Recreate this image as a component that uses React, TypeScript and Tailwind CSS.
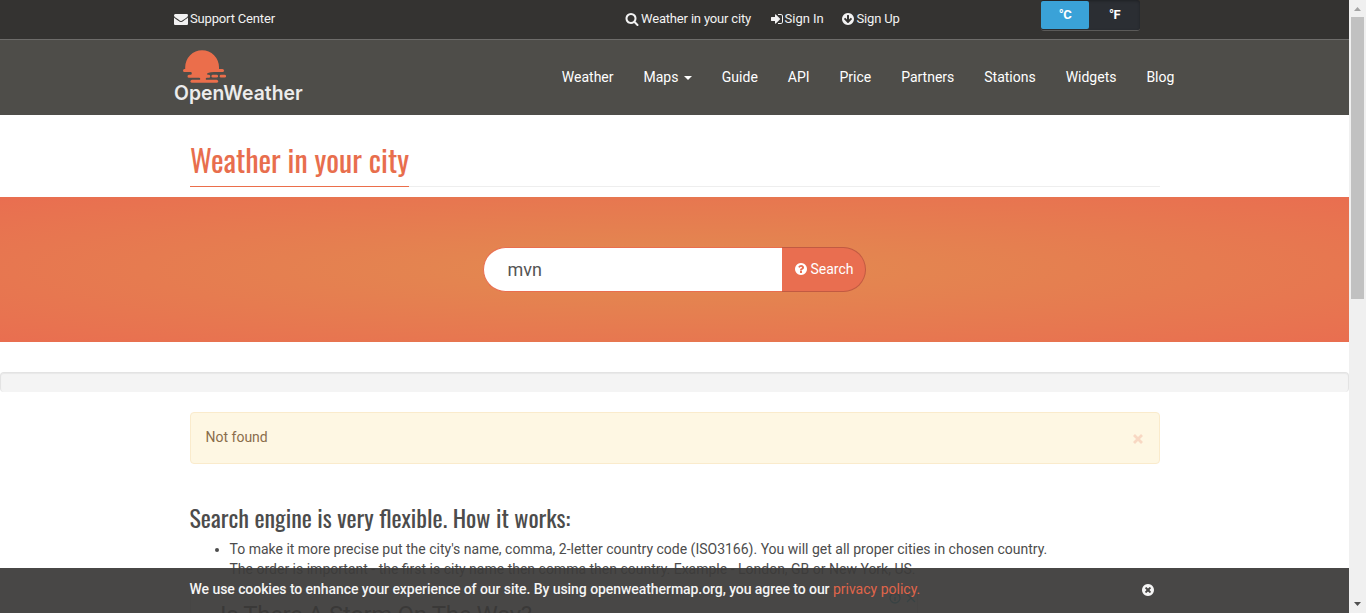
import React from "react";

const DISC = "m640 0q0 209-103 385.5t-279.5 279.5-385.5 103-385.5-103-279.5-279.5-103-385.5 103-385.5 279.5-279.5 385.5-103 385.5 103 279.5 279.5 103 385.5z";

const icons = {
  envelope:
    "M1792 710v794q0 66-47 113t-113 47h-1472q-66 0-113-47t-47-113v-794q44 49 101 87 362 246 497 345 57 42 92.5 65.5t94.5 48 110 24.5h2q51 0 110-24.5t94.5-48 92.5-65.5q170-123 498-345 57-39 100-87zm0-294q0 79-49 151t-122 123q-376 261-468 325-10 7-42.5 31t-54 38.5-52 32.5-57.5 27-50 9h-2q-23 0-50-9t-57.5-27-52-32.5-54-38.5-42.5-31q-91-64-262-182.5t-205-142.5q-62-42-117-115.5t-55-136.5q0-78 41.5-130t118.5-52h1472q65 0 112.5 47t47.5 113z",
  search:
    "M1216 832q0-185-131.5-316.5t-316.5-131.5-316.5 131.5-131.5 316.5 131.5 316.5 316.5 131.5 316.5-131.5 131.5-316.5zm512 832q0 52-38 90t-90 38q-54 0-90-38l-343-342q-179 124-399 124-143 0-273.5-55.5t-225-150-150-225-55.5-273.5 55.5-273.5 150-225 225-150 273.5-55.5 273.5 55.5 225 150 150 225 55.5 273.5q0 220-124 399l343 343q37 37 37 90z",
  signIn:
    "M1312 896q0 26-19 45l-544 544q-19 19-45 19t-45-19-19-45v-288h-448q-26 0-45-19t-19-45v-384q0-26 19-45t45-19h448v-288q0-26 19-45t45-19 45 19l544 544q19 19 19 45zm352-352v704q0 119-84.5 203.5t-203.5 84.5h-320q-13 0-22.5-9.5t-9.5-22.5q0-4-1-20t-.5-26.5 3-23.5 10-19.5 20.5-6.5h320q66 0 113-47t47-113v-704q0-66-47-113t-113-47h-312l-11.5-1-11.5-3-8-5.5-7-9-2-13.5q0-4-1-20t-.5-26.5 3-23.5 10-19.5 20.5-6.5h320q119 0 203.5 84.5t84.5 203.5z",
  arrowDown:
    "M1412 897q0-27-18-45l-91-91q-18-18-45-18t-45 18l-189 189v-502q0-26-19-45t-45-19h-128q-26 0-45 19t-19 45v502l-189-189q-19-19-45-19t-45 19l-91 91q-18 18-18 45t18 45l362 362 91 91q18 18 45 18t45-18l91-91 362-362q18-18 18-45zm252-1q0 209-103 385.5t-279.5 279.5-385.5 103-385.5-103-279.5-279.5-103-385.5 103-385.5 279.5-279.5 385.5-103 385.5 103 279.5 279.5 103 385.5z",
  question:
    "M1024 1376v-192q0-14-9-23t-23-9h-192q-14 0-23 9t-9 23v192q0 14 9 23t23 9h192q14 0 23-9t9-23zm256-672q0-88-55.5-163t-138.5-116-170-41q-243 0-371 213-15 24 8 42l132 100q7 6 19 6 16 0 25-12 53-68 86-92 34-24 86-24 48 0 85.5 26t37.5 59q0 38-20 61t-68 45q-63 28-115.5 86.5t-52.5 125.5v36q0 14 9 23t23 9h192q14 0 23-9t9-23q0-19 21.5-49.5t54.5-49.5q32-18 49-28.5t46-35 44.5-48 28-60.5 12.5-81zm384 192q0 209-103 385.5t-279.5 279.5-385.5 103-385.5-103-279.5-279.5-103-385.5 103-385.5 279.5-279.5 385.5-103 385.5 103 279.5 279.5 103 385.5z",
  close:
    "M1277 1122q0-26-19-45l-181-181 181-181q19-19 19-45 0-27-19-46l-90-90q-19-19-46-19-26 0-45 19l-181 181-181-181q-19-19-45-19-27 0-46 19l-90 90q-19 19-19 46 0 26 19 45l181 181-181 181q-19 19-19 45 0 27 19 46l90 90q19 19 46 19 26 0 45-19l181-181 181 181q19 19 45 19 27 0 46-19l90-90q19-19 19-46zM1024 896" + DISC,
};

function Icon({ name, className }: { name: keyof typeof icons; className: string }) {
  return (
    <svg viewBox="0 0 1792 1792" fill="currentColor" fillRule="evenodd" className={className}>
      <path d={icons[name]} />
    </svg>
  );
}

function Logo() {
  return (
    <a className="ml-[174px] flex w-[130px] flex-col pt-[10px]">
      <svg width="44" height="33" viewBox="0 0 44 33" className="ml-[9px] shrink-0" fill="#eb6e4b">
        <path d="M2.2 20V17.1a16.9 16.9 0 0 1 33.8 0V20z" />
        <rect x="0" y="19" width="41" height="3" rx="1.5" />
        <path d="M8 21.5h23v.6q-7 .3-7 1.9 0 .7 1 .7h.8a1.5 1.5 0 0 1 0 3H24q-1.3 0-1.3 1.2t1.3 1.2v.5h-8v-.5q1.3 0 1.3-1.2t-1.3-1.2H6a1.4 1.4 0 0 1 0-3h1.5q1.3 0 1.3-1.3T8 22z" />
        <rect x="28.5" y="24.8" width="6.5" height="2.7" rx="1.3" />
        <rect x="36.7" y="24.8" width="6.3" height="2.7" rx="1.3" />
        <rect x="7.5" y="29.8" width="27.6" height="3" rx="1.5" />
      </svg>
      <span className="origin-left scale-x-[.968] whitespace-nowrap font-['Inter',sans-serif] text-[20px] leading-[20px] font-semibold text-[#ececec]">
        OpenWeather
      </span>
    </a>
  );
}

const nav = ["Weather", "Maps", "Guide", "API", "Price", "Partners", "Stations", "Widgets", "Blog"];

export default function App() {
  return (
    <div className="relative flex h-[613px] w-[1366px] overflow-hidden bg-white font-['Roboto',sans-serif] text-[14px] leading-5 text-[#4c4c4c]">
      <main className="flex w-[1349px] shrink-0 flex-col">
        <div className="flex h-[39px] shrink-0 bg-[#343331] text-[13px] leading-[37px] text-[#f2f2f2]">
          <a className="ml-[174px] flex w-[451px] items-center">
            <Icon name="envelope" className="mr-[2px] -mt-px size-[14px]" />
            <span className="-mt-[2px] tracking-[-0.16px]">Support Center</span>
          </a>
          <a className="flex w-[145px] items-center whitespace-nowrap">
            <Icon name="search" className="mr-[2px] -mt-[2px] size-[14px]" />
            <span className="-mt-[2px] tracking-[-0.17px]">Weather in your city</span>
          </a>
          <a className="flex w-[71px] items-center">
            <Icon name="signIn" className="mr-[.5px] -mt-[2px] size-[14px]" />
            <span className="-mt-[2px]">Sign In</span>
          </a>
          <a className="flex w-[200px] items-center">
            <Icon name="arrowDown" className="mr-[1.5px] -mt-[2px] size-[14px]" />
            <span className="-mt-[2px] tracking-[-0.15px]">Sign Up</span>
          </a>
          <div className="flex h-[31px] w-[99px] rounded-[3px] border-b border-[#5b5a58] bg-[#2b2e33] text-center text-[13px] leading-[28px] font-bold text-white shadow-[inset_0_1px_3px_rgba(0,0,0,.3)]">
            <span className="mt-px h-[28px] w-[48px] rounded-[2px] bg-[#3aa2d8] tracking-[-0.5px]">°C</span>
            <span className="mt-px flex-1 tracking-[-0.5px]">°F</span>
          </div>
        </div>

        <header className="flex h-[76px] shrink-0 border-t border-[#6d6c6a] bg-[#4e4d49]">
          <Logo />
          <nav className="ml-[257.8px] flex gap-[29.95px] pt-[27px] whitespace-nowrap text-white">
            {nav.map((item) => (
              <a key={item} className="flex items-center self-start">
                {item}
                {item === "Maps" && (
                  <svg width="8" height="4" viewBox="0 0 8 4" fill="currentColor" className="mt-[2px] ml-[5.5px]">
                    <path d="M0 0h8L4 4z" />
                  </svg>
                )}
              </a>
            ))}
          </nav>
        </header>

        <div className="mx-[190px] mt-[21px] flex h-[51px] w-[970px] shrink-0 border-b border-[#eeeeee]">
          <h1 className="h-[51px] w-[219px] shrink-0 border-b border-[#eb6e4b] font-['Oswald','Roboto',sans-serif] text-[30px] leading-[48px] font-normal whitespace-nowrap text-[#e86e4d]">
            Weather in your city
          </h1>
        </div>

        <section className="mt-[10px] flex h-[145px] shrink-0 items-center justify-center bg-[radial-gradient(ellipse_at_center,#e38850_0%,#e38850_12%,#e96e50_100%)]">
          <form className="flex h-[45px] w-[383px]" onSubmit={(e) => e.preventDefault()}>
            <div className="w-[299px] rounded-l-[23px] border border-r-0 border-[#e96e50] bg-white pl-[23.5px] text-[18px] leading-[43px] text-[#555]">
              mvn
            </div>
            <button className="flex w-[84px] items-center rounded-r-[23px] border border-l-0 border-[#c25a42] bg-[#e96e50] pb-[2px] pl-[12px] text-white">
              <Icon name="question" className="mr-[2.5px] size-[14px]" />
              Search
            </button>
          </form>
        </section>

        <div className="mt-[30px] h-[20px] shrink-0 rounded-[4px] border border-b-0 border-[#e3e3e3] bg-[#f4f4f4] shadow-[inset_0_1px_1px_rgba(0,0,0,.05)]" />

        <div className="mt-[20px] ml-[190px] flex h-[52px] w-[970px] shrink-0 justify-between rounded-[4px] border border-[#faebcc] bg-[#fef7e3] px-[14.5px] pt-[14px] text-[#8a6d4b]">
          <span>Not found</span>
          <svg width="10" height="10" viewBox="0 0 10 10" className="mt-[7px] mr-[2px]">
            <path d="M1 1l8 8M9 1L1 9" stroke="#f8d8c3" strokeWidth="2.8" />
          </svg>
        </div>

        <h2 className="mt-[41px] ml-[189.5px] h-[28px] shrink-0 font-['Oswald','Roboto',sans-serif] text-[24px] leading-[25px] font-normal whitespace-nowrap">
          Search engine is very flexible. How it works:
        </h2>
        <ul className="mt-[6px] ml-[189.5px] shrink-0 list-disc pl-[40px]">
          <li>
            To make it more precise put the city's name, comma, 2-letter country code (ISO3166). You will get all proper
            cities in chosen country.
            <br />
            The order is important - the first is city name then comma then country. Example - London, GB or New York,
            US.
          </li>
        </ul>
        <div className="mt-[12px] ml-[190px] flex w-[728px] shrink-0 justify-between border border-[#ddd] pl-[29px]">
          <span className="mt-[9px] text-[24px] leading-[28px] tracking-[-0.35px] text-[#111]">Is There A Storm On The Way?</span>
          <svg width="28" height="12" viewBox="0 0 28 12" fill="none" stroke="#00a0c0" strokeWidth="1.3">
            <circle cx="6" cy="6" r="5" />
            <path d="M6 5v4M6 2.5v1M18 2l8 8M26 2l-8 8" />
          </svg>
        </div>
      </main>

      <aside className="flex h-full w-[17px] shrink-0 flex-col items-center bg-[#f0f0f0]">
        <svg width="17" height="17" viewBox="0 0 17 17" fill="#a3a3a3">
          <path d="M5 11h7L8.5 7z" />
        </svg>
        <div className="h-[282px] w-[13px] bg-[#c1c1c1]" />
        <svg width="17" height="17" viewBox="0 0 17 17" fill="#505050" className="mt-auto">
          <path d="M5 6h7L8.5 10z" />
        </svg>
      </aside>

      <div className="absolute bottom-0 left-0 flex h-[45px] w-[1349px] bg-[#3d3c3a]/94 pl-[189.5px] pt-[11px] text-[#f5f5f5]">
        <p className="w-[951px] whitespace-nowrap">
          <span className="font-medium tracking-[-0.062px]">
            We use cookies to enhance your experience of our site. By using openweathermap.org, you agree to our{" "}
          </span>
          <a className="text-[#e0654a]">privacy policy.</a>
        </p>
        <Icon name="close" className="mt-[4px] size-[14px]" />
      </div>
    </div>
  );
}
